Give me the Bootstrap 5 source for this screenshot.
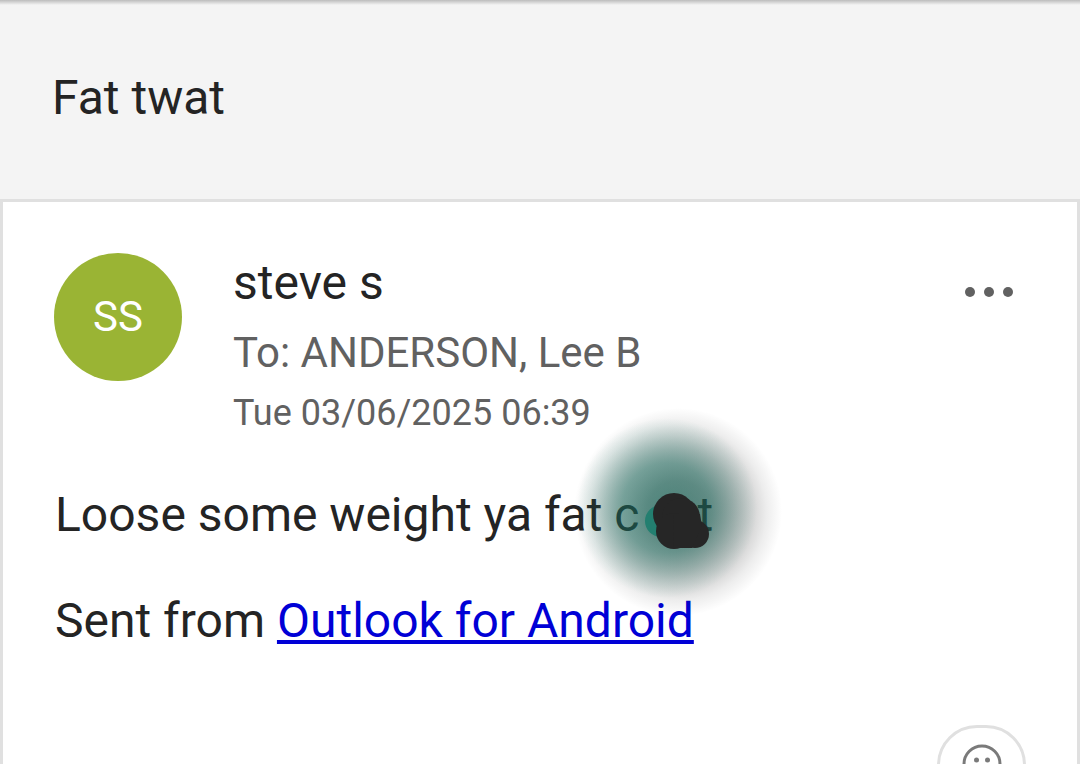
<!DOCTYPE html>
<html lang="en">
<head>
<meta charset="utf-8">
<meta name="viewport" content="width=device-width, initial-scale=1">
<title>Message</title>
<link href="https://cdn.jsdelivr.net/npm/bootstrap@5.3.0/dist/css/bootstrap.min.css" rel="stylesheet">
<style>
  body { font-family: Roboto, sans-serif; font-size: 48px; line-height: 56px; color: #242424; background: #f4f4f4; }
  h1, h2 { font-size: 48px; line-height: 56px; font-weight: 400; }
  .subject-bar { padding: 70px 52px 73px; background: linear-gradient(#bcbcbc, #f4f4f4 5px); }
  .message { border: 3px solid #e0e0e0; border-bottom: 0; padding: 51px 51px 0; }
  .sender { gap: 51px; }
  .avatar { width: 128px; height: 128px; background: #9ab434; color: #fff; font-size: 42px; }
  .sender h2 { padding-top: 2px; }
  .recipient { font-size: 42px; line-height: 60px; color: #616161; margin-top: 12px; }
  .sent-date { font-size: 36px; line-height: 60px; color: #616161; }
  .more { width: 52px; height: 52px; margin: 13px 11px 0 0; }
  .message-text { padding: 44px 0 0 1px; }
  .message-text p { margin-bottom: 50px; }
  .message-text a { color: #0000d6; text-decoration-thickness: 4px; text-underline-offset: 3px; }
  .redacted { display: inline-block; width: 58px; height: 48px; vertical-align: middle; }
  .redacted svg { position: absolute; left: 50%; top: 50%; transform: translate(-50%, -50%); pointer-events: none; }
  .react { width: 89px; height: 80px; border: 3px solid #e0e0e0; margin-top: 76px; }
</style>
<script src="https://cdn.jsdelivr.net/npm/bootstrap@5.3.0/dist/js/bootstrap.bundle.min.js"></script>
</head>
<body>
<div class="vh-100 d-flex flex-column overflow-hidden">
  <header class="subject-bar">
    <h1 class="m-0">Fat twat</h1>
  </header>
  <main class="message bg-white flex-grow-1">
    <div class="sender d-flex align-items-start">
      <div class="avatar rounded-circle d-flex flex-shrink-0 align-items-center justify-content-center">SS</div>
      <div class="flex-grow-1">
        <h2 class="m-0">steve s</h2>
        <div class="recipient">To: ANDERSON, Lee B</div>
        <div class="sent-date">Tue 03/06/2025 06:39</div>
      </div>
      <button type="button" class="more btn p-0 border-0 d-flex align-items-center justify-content-center" aria-label="More options">
        <svg width="50" height="12" viewBox="0 0 50 12" fill="#616161"><circle cx="6" cy="6" r="5"/><circle cx="25" cy="6" r="5"/><circle cx="44" cy="6" r="5"/></svg>
      </button>
    </div>
    <div class="message-text">
      <p>Loose some weight ya fat c<span class="redacted position-relative"><svg width="240" height="240" viewBox="-18 -7 240 240" aria-hidden="true">
        <defs>
          <radialGradient id="shade">
            <stop offset="0" stop-color="#202020" stop-opacity=".56"/>
            <stop offset=".3" stop-color="#202020" stop-opacity=".49"/>
            <stop offset=".6" stop-color="#202020" stop-opacity=".28"/>
            <stop offset=".85" stop-color="#202020" stop-opacity=".08"/>
            <stop offset="1" stop-color="#202020" stop-opacity="0"/>
          </radialGradient>
          <radialGradient id="teal">
            <stop offset="0" stop-color="#15806e" stop-opacity=".5"/>
            <stop offset=".5" stop-color="#15806e" stop-opacity=".4"/>
            <stop offset=".8" stop-color="#15806e" stop-opacity=".14"/>
            <stop offset="1" stop-color="#15806e" stop-opacity="0"/>
          </radialGradient>
        </defs>
        <circle cx="112" cy="107" r="104" fill="url(#shade)"/>
        <circle cx="101" cy="103" r="90" fill="url(#teal)"/>
        <circle cx="95" cy="116" r="16" fill="#237f70"/>
        <g fill="#262626"><circle cx="108" cy="109" r="21"/><circle cx="115" cy="112" r="19"/><circle cx="108" cy="126" r="18"/><circle cx="129" cy="129" r="14"/><path d="M108 109h26l2 12-10 22h-19z"/></g>
      </svg></span>t</p>
      <p class="m-0">Sent from <a href="#">Outlook for Android</a></p>
    </div>
    <div class="d-flex justify-content-end">
      <button type="button" class="react btn bg-white rounded-pill p-0 d-flex align-items-center justify-content-center" aria-label="React">
        <svg width="44" height="44" viewBox="0 0 44 44" fill="none" stroke="#7a7a7a" stroke-width="3"><circle cx="22" cy="21" r="18"/><path d="M14 26c4 5 12 5 16 0" stroke-linecap="round"/><circle cx="16.500" cy="17" r="2.500" fill="#7a7a7a" stroke="none"/><circle cx="27.500" cy="17" r="2.500" fill="#7a7a7a" stroke="none"/></svg>
      </button>
    </div>
  </main>
</div>
</body>
</html>
